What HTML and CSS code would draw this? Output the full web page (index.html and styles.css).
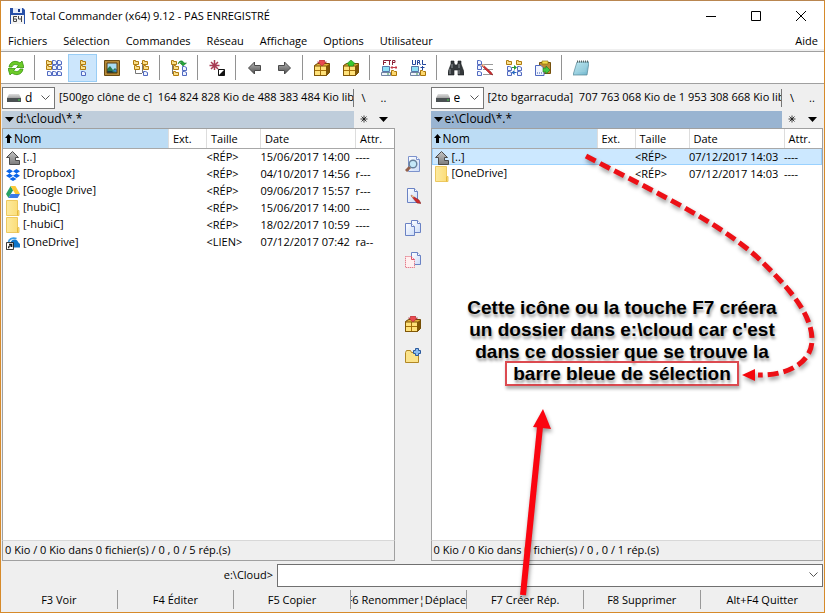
FILE: index.html
```
<!DOCTYPE html>
<html lang="fr">
<head>
<meta charset="utf-8">
<title>Total Commander (x64) 9.12 - PAS ENREGISTRÉ</title>
<link rel="stylesheet" href="styles.css">
</head>
<body>
<svg class="defs" aria-hidden="true">
  <defs>
    <linearGradient id="g-arrow" x1="0" y1="0" x2="0" y2="1"><stop offset="0" stop-color="#b5b5b5"/><stop offset="1" stop-color="#4e4e4e"/></linearGradient>
    <linearGradient id="g-up" x1="0" y1="0" x2="0" y2="1"><stop offset="0" stop-color="#c4c4c4"/><stop offset="1" stop-color="#7c7c7c"/></linearGradient>
    <linearGradient id="g-folder" x1="0" y1="0" x2="1" y2="0"><stop offset="0" stop-color="#fdeaa0"/><stop offset="1" stop-color="#fbdc74"/></linearGradient>
    <linearGradient id="g-page" x1="0" y1="0" x2="1" y2="1"><stop offset="0" stop-color="#fff"/><stop offset="1" stop-color="#ccdcf8"/></linearGradient>
    <linearGradient id="g-note" x1="0" y1="0" x2="1" y2="1"><stop offset="0" stop-color="#c8f0f8"/><stop offset="1" stop-color="#6fb4cc"/></linearGradient>
    <linearGradient id="g-drive" x1="0" y1="0" x2="0" y2="1"><stop offset="0" stop-color="#dedede"/><stop offset="1" stop-color="#a4a4a4"/></linearGradient>
    <symbol id="fold" viewBox="0 0 6 5"><path d="M.5 .5h2v1h3v3h-5z" fill="#fbe08a" stroke="#b07c10"/></symbol>
    <symbol id="doc" viewBox="0 0 5 5"><path d="M.5 .5h2l2 1v3h-4z" fill="#eef3ff" stroke="#5069c0"/></symbol>
    <symbol id="i-app" viewBox="0 0 16 16"><path d="M1 0h13l2 2v14H1z" fill="#2850a8"/><path d="M4 0h9v5H4z" fill="#e8eefa"/><path d="M9 1h2v3H9z" fill="#17388a"/><path d="M2 7h13v9H2z" fill="#f4f4f4"/><path d="M8 8.500H4.500v5h3v-2.500h-3M9.500 8v3h3.500M12.500 8v6" fill="none" stroke="#444"/></symbol>
    <symbol id="i-refresh" viewBox="0 0 16 16"><path d="M1 7C2 1 8 0 12 3l2-2 2 6.500H8.500l2-2C8 4 5 4 4 7zM15 9c-1 6-7 7-11 4l-2 2-2-6.500h7.500l-2 2c2.500 1.500 5.500 1.500 6.500-1.500z" fill="#6ccb28" stroke="#3a940f" stroke-width=".8"/></symbol>
    <symbol id="i-brief" viewBox="0 0 16 16"><use href="#fold" width="6" height="5"/><use href="#fold" y="5" width="6" height="5"/><use href="#doc" x="1" y="11" width="5" height="5"/><use href="#doc" x="6" width="5" height="5"/><use href="#doc" x="6" y="5" width="5" height="5"/><use href="#doc" x="6" y="11" width="5" height="5"/><use href="#doc" x="11" width="5" height="5"/><use href="#doc" x="11" y="5" width="5" height="5"/><use href="#doc" x="11" y="11" width="5" height="5"/></symbol>
    <symbol id="i-full" viewBox="0 0 16 16"><use href="#fold" x="5" width="6" height="5"/><use href="#fold" x="5" y="5" width="6" height="5"/><use href="#doc" x="6" y="11" width="5" height="5"/></symbol>
    <symbol id="i-thumb" viewBox="0 0 16 16"><path d="M.5 .5h15v15H.5z" fill="#b58a38" stroke="#6a4a12"/><path d="M3 3h10v10H3z" fill="#a8dcf2"/><path d="M3 9l3-3 3 4 2-2 2 2v3H3z" fill="#297850"/><path d="M3 11h5l2 2H3z" fill="#173c48"/><path d="M8 11l5-2v3z" fill="#3a84d8"/><path d="M3 3h10v10H3z" fill="none" stroke="#593c10"/></symbol>
    <symbol id="i-tree" viewBox="0 0 16 16"><path d="M2.500 5v8.500H9M8 3.500h2M9.500 4v9" fill="none" stroke="#777"/><use href="#fold" width="6" height="5"/><use href="#fold" x="1" y="5" width="6" height="5"/><use href="#fold" x="9" y="0" width="6" height="5"/><use href="#fold" x="10" y="5" width="6" height="5"/><use href="#doc" x="10" y="11" width="5" height="5"/></symbol>
    <symbol id="i-branch" viewBox="0 0 16 16"><path d="M1.500 4v10M2 8h3M2 14h3" fill="none" stroke="#777"/><use href="#fold" width="6" height="5"/><use href="#fold" x="2" y="5" width="6" height="5"/><use href="#fold" x="2" y="11" width="6" height="5"/><use href="#doc" x="11" y="6" width="5" height="5"/><use href="#doc" x="11" y="11" width="5" height="5"/><path d="M7 4c1-4 5-4 6-1h2.500L12 6 9 3h2c-1-1-2-1-4 1z" fill="#25a53a" stroke="#157528" stroke-width=".5"/></symbol>
    <symbol id="i-invert" viewBox="0 0 16 16"><path d="M5.500 0v10M.5 5.500h10M2 2l7 7M9 2l-7 7" stroke="#a83c54" stroke-width="1.500"/><path d="M9.500 9.500h6v6h-6z" fill="#111" stroke="#111"/><path d="M10 10h5l-5 5z" fill="#fff"/></symbol>
    <symbol id="i-left" viewBox="0 0 16 16"><path d="M1.500 8l6-6v3.500h6v5h-6V14z" fill="url(#g-arrow)" stroke="#4a4a4a"/></symbol>
    <symbol id="i-right" viewBox="0 0 16 16"><path d="M14.500 8l-6-6v3.500h-6v5h6V14z" fill="url(#g-arrow)" stroke="#4a4a4a"/></symbol>
    <symbol id="box" viewBox="0 0 16 16"><path d="M.5 5.500l3-2h12v9l-3 3H.5z" fill="#b98418" stroke="#6c4806"/><path d="M1 6h11.500v9H1z" fill="#ffe27a"/><path d="M12.500 6l3-2v8.500l-3 3z" fill="#805707"/><path d="M6.500 6v9M1 10.500h11.500" stroke="#a4700a"/><path d="M1 6l3-2h11l-3 2z" fill="#e4b33c"/><path d="M.5 6v9.500h12V6z" fill="none" stroke="#805707"/></symbol>
    <symbol id="i-pack" viewBox="0 0 16 16"><use href="#box" width="16" height="16"/><path d="M5.500 0h5v2h2L8 6 3.500 2h2z" fill="#e84a50" stroke="#a62830" stroke-width=".6"/></symbol>
    <symbol id="i-unpack" viewBox="0 0 16 16"><use href="#box" width="16" height="16"/><path d="M8 0l4.500 4h-2v2h-5V4h-2z" fill="#38c82e" stroke="#208018" stroke-width=".6"/></symbol>
    <symbol id="pc" viewBox="0 0 16 10"><path d="M1.500 .5h7v5h-7z" fill="#8fdff5" stroke="#5577a8"/><path d="M.5 6.500h9v3h-9z" fill="#eef2f8" stroke="#7284a4"/><path d="M6 8h2" stroke="#3a9c4a"/><path d="M10.500 4.500h2l1 1h2v4h-5z" fill="#fcd870" stroke="#a87408"/></symbol>
    <symbol id="i-ftp" viewBox="0 0 16 16"><path d="M2.500 5V.5H6M3 2.500h2M6 .5h4M8.500 1v4M11.500 5V.5H14v2h-2" fill="none" stroke="#8d2439"/><use href="#pc" y="6" width="16" height="10"/><path d="M10 7.500h6M11.500 6L10 7.500 11.500 9M14.500 6L16 7.500 14.500 9" fill="none" stroke="#c43a48"/></symbol>
    <symbol id="i-url" viewBox="0 0 16 16"><path d="M2.500 0v4.500h3V0M7.500 5V.5h2v2h-2M9 2.500l1.500 2.500M12.500 0v4.500H16" fill="none" stroke="#23479c"/><use href="#pc" y="6" width="16" height="10"/><path d="M12.500 6v4M10.500 7.500h4" stroke="#23479c"/></symbol>
    <symbol id="i-find" viewBox="0 0 16 16"><path d="M3 1h3v2l1 2h2l1-2V1h3v3l3 8v3h-6v-5H6v5H0v-3l3-8z" fill="#34383b" stroke="#1d2022" stroke-width=".6"/><path d="M4 4v4M2 9v5M11 4v4M11 10v4" stroke="#8e9499"/></symbol>
    <symbol id="i-rename" viewBox="0 0 16 16"><use href="#doc" width="5" height="5"/><use href="#doc" y="5" width="5" height="5"/><use href="#doc" y="11" width="5" height="5"/><path d="M6 4.500h10M6 9.500h10M6 14.500h10" stroke="#999"/><path d="M5 4l9 8 2 3-3-1-8-8z" fill="#d62c30" stroke="#801818" stroke-width=".5"/><path d="M5 4l3 1-2 2z" fill="#f4d6a0"/></symbol>
    <symbol id="i-sync" viewBox="0 0 16 16"><use href="#fold" width="6" height="5"/><use href="#fold" x="10" width="6" height="5"/><use href="#doc" x="1" y="6" width="5" height="5"/><use href="#doc" x="1" y="11" width="5" height="5"/><use href="#doc" x="11" y="6" width="5" height="5"/><use href="#doc" x="11" y="11" width="5" height="5"/><path d="M6 7h2V5l3 2.500L8 10V8H6z" fill="#289a30"/><path d="M10.500 13h-2v2l-3-2.500 3-2.500v2h2z" fill="#2768c0"/></symbol>
    <symbol id="i-clip" viewBox="0 0 16 16"><path d="M4.500 2.500h11v11h-11z" fill="#bd8b33" stroke="#75500d"/><path d="M7 1h6v3H7z" fill="#f5dc49" stroke="#8a7210" stroke-width=".7"/><path d="M.5 5.500H6l3 3v7H.5z" fill="#f1f5ff" stroke="#5069c0"/><path d="M2 13h6" stroke="#3658a8" stroke-dasharray="1 1"/><path d="M8 8h3V6l4 4-4 4v-2H8z" fill="#42c842" stroke="#1f781f" stroke-width=".6"/></symbol>
    <symbol id="i-note" viewBox="0 0 16 16"><path d="M4 2h12l-2 13H0z" fill="url(#g-note)" stroke="#548494" stroke-width=".7"/><path d="M4 5h10M3.500 7h10M3 9h10M2.500 11h10" stroke="#a8d6e0" stroke-width=".7"/><path d="M4 1.500h12" stroke="#566" stroke-width="2" stroke-dasharray="1 1"/></symbol>
    <symbol id="page" viewBox="0 0 10 13"><path d="M.5 .5h6l3 3v9h-9z" fill="url(#g-page)" stroke="#6a82c4"/><path d="M6.500 .5v3h3" fill="#fff" stroke="#6a82c4"/></symbol>
    <symbol id="i-view" viewBox="0 0 16 16"><path d="M3.500 .5h8l3 3v12h-11z" fill="url(#g-page)" stroke="#7c92cc"/><path d="M11.500 .5v3h3" fill="#fff" stroke="#7c92cc"/><path d="M1 15l4-4" stroke="#94604a" stroke-width="3"/><circle cx="8" cy="8" r="3.800" fill="#c5e8f8" stroke="#66809a" stroke-width="1.400"/></symbol>
    <symbol id="i-edit" viewBox="0 0 16 16"><path d="M2.500 .5h7l3 3v11h-10z" fill="url(#g-page)" stroke="#6a82c4"/><path d="M9.500 .5v3h3" fill="#fff" stroke="#6a82c4"/><path d="M6 7l8 5 2 3.500-4-.5-5-6z" fill="#cf292c" stroke="#762020" stroke-width=".5"/><path d="M6 7l3 1-1 2z" fill="#f1ce8d"/></symbol>
    <symbol id="i-copy" viewBox="0 0 16 16"><use href="#page" x="6" width="10" height="13"/><use href="#page" y="3" width="10" height="13"/></symbol>
    <symbol id="i-move" viewBox="0 0 16 16"><use href="#page" x="6" width="10" height="13"/><path d="M.5 4.500h6l3 3v8h-9z" fill="#fff0f0" stroke="#e05468" stroke-dasharray="1 1"/><path d="M6.500 4.500v3h3" fill="none" stroke="#e05468"/></symbol>
    <symbol id="i-newdir" viewBox="0 0 16 16"><path d="M.5 4.500l1-2h4l1 2h7v10h-13z" fill="#fbe38a" stroke="#b18724"/><path d="M10.500 .5h3v2h2v3h-2v2h-3v-2h-2v-3h2z" fill="#8bbdf2" stroke="#2c5a9c"/></symbol>
    <symbol id="i-up" viewBox="0 0 14 14"><path d="M6.500 .5l6 6h-3v3h4v4h-10v-7h-3z" fill="url(#g-up)" stroke="#4c4c4c"/></symbol>
    <symbol id="i-dropbox" viewBox="0 0 14 14"><path d="M3.500 1L7 3.200 3.500 5.400 0 3.200zM10.500 1L14 3.200l-3.500 2.200L7 3.200zM3.500 5.600L7 7.800 3.500 10 0 7.800zM10.500 5.600L14 7.800 10.500 10 7 7.800zM7 9l3.500 2L7 13l-3.500-2z" fill="#0b65e8"/></symbol>
    <symbol id="i-gdrive" viewBox="0 0 14 14"><path d="M4.600 1l2.500 4.300L2.500 13 0 9z" fill="#27a365"/><path d="M4.600 1h4.800L14 9H9.300z" fill="#fbc936"/><path d="M4.700 9H14l-2.400 4H2.500z" fill="#3c7be8"/></symbol>
    <symbol id="i-folder" viewBox="0 0 14 16"><path d="M.5 .5h11v10h1.500v5H.5z" fill="url(#g-folder)" stroke="#edc85f"/><path d="M11.500 10.500v5" stroke="#e5b93c"/></symbol>
    <symbol id="i-onedrive" viewBox="0 0 16 16"><path d="M5 13V9c0-3 2-5 5-5 2 0 3 1 4 3l2 2v4z" fill="#0f75c9"/><path d="M3 7c0-3 4-6 9-4" fill="none" stroke="#3e9ee8" stroke-width="2"/><path d="M.5 7.500h8v8h-8z" fill="#fff" stroke="#111"/><path d="M3 14c0-3 1-3 3-3M3.500 9.500h3v3" fill="none" stroke="#111" stroke-width="1.500"/></symbol>
    <symbol id="i-drive" viewBox="0 0 14 9"><path d="M2 1h10l2 4H0z" fill="url(#g-drive)"/><path d="M0 5h14v4H0z" fill="#4a5052"/><path d="M11 7h2" stroke="#48d848"/></symbol>
    <symbol id="i-chev" viewBox="0 0 9 6"><path d="M.5 .5l4 4 4-4" fill="none" stroke="#555"/></symbol>
    <symbol id="i-sort" viewBox="0 0 7 9"><path d="M3.500 0L7 4H5v5H2V4H0z"/></symbol>
    <symbol id="i-tri" viewBox="0 0 9 5"><path d="M0 0h9L4.500 5z"/></symbol>
    <symbol id="i-star" viewBox="0 0 8 8"><path d="M4 .5v7M.5 4h7M1.500 1.500l5 5M6.500 1.500l-5 5" stroke="#111" stroke-width=".8"/></symbol>
  </defs>
</svg>

<div class="window">
  <header class="titlebar">
    <svg class="ico"><use href="#i-app"/></svg>
    <h1>Total Commander (x64) 9.12 - PAS ENREGISTRÉ</h1>
    <div class="winbtns">
      <button aria-label="Réduire"><svg width="10" height="10"><path d="M0 5.500h10" stroke="#000"/></svg></button>
      <button aria-label="Agrandir"><svg width="10" height="10"><path d="M.5 .5h9v9h-9z" fill="none" stroke="#000"/></svg></button>
      <button aria-label="Fermer"><svg width="10" height="10"><path d="M0 0l10 10M10 0L0 10" stroke="#000"/></svg></button>
    </div>
  </header>
  <nav class="menubar">
    <button>Fichiers</button><button>Sélection</button><button>Commandes</button><button>Réseau</button><button>Affichage</button><button>Options</button><button>Utilisateur</button><button class="help">Aide</button>
  </nav>
  <div class="toolbar">
    <button aria-label="Actualiser"><svg class="ico"><use href="#i-refresh"/></svg></button><i></i>
    <button aria-label="Abrégé"><svg class="ico"><use href="#i-brief"/></svg></button>
    <button class="on" aria-label="Détaillé"><svg class="ico"><use href="#i-full"/></svg></button>
    <button aria-label="Miniatures"><svg class="ico"><use href="#i-thumb"/></svg></button>
    <button aria-label="Arborescence"><svg class="ico"><use href="#i-tree"/></svg></button><i></i>
    <button aria-label="Vue à plat"><svg class="ico"><use href="#i-branch"/></svg></button><i></i>
    <button aria-label="Inverser la sélection"><svg class="ico"><use href="#i-invert"/></svg></button><i></i>
    <button aria-label="Précédent"><svg class="ico"><use href="#i-left"/></svg></button>
    <button aria-label="Suivant"><svg class="ico"><use href="#i-right"/></svg></button><i></i>
    <button aria-label="Compresser"><svg class="ico"><use href="#i-pack"/></svg></button>
    <button aria-label="Décompresser"><svg class="ico"><use href="#i-unpack"/></svg></button><i></i>
    <button aria-label="Connexion FTP"><svg class="ico"><use href="#i-ftp"/></svg></button>
    <button aria-label="Nouvelle URL"><svg class="ico"><use href="#i-url"/></svg></button><i></i>
    <button aria-label="Rechercher"><svg class="ico"><use href="#i-find"/></svg></button>
    <button aria-label="Renommer par lot"><svg class="ico"><use href="#i-rename"/></svg></button>
    <button aria-label="Synchroniser"><svg class="ico"><use href="#i-sync"/></svg></button>
    <button aria-label="Copier les noms"><svg class="ico"><use href="#i-clip"/></svg></button><i></i>
    <button aria-label="Bloc-notes"><svg class="ico"><use href="#i-note"/></svg></button>
  </div>

  <main class="panes">
    <section class="pane">
      <div class="driverow">
        <div class="drive"><svg width="14" height="9"><use href="#i-drive"/></svg><select aria-label="Lecteur gauche"><option>d</option></select><svg width="9" height="6"><use href="#i-chev"/></svg></div>
        <div class="space">[500go clône de c]&nbsp; 164 824 828 Kio de 488 383 484 Kio libres</div>
        <div class="side"><button>\</button><button>..</button></div>
      </div>
      <div class="pathrow">
        <div class="path"><svg width="9" height="5"><use href="#i-tri"/></svg>d:\cloud\*.*</div>
        <div class="side"><button aria-label="Favoris"><svg width="8" height="8"><use href="#i-star"/></svg></button><button aria-label="Historique"><svg width="9" height="5"><use href="#i-tri"/></svg></button></div>
      </div>
      <div class="list">
        <table>
          <colgroup><col><col class="c-ext"><col class="c-size"><col class="c-date"><col class="c-attr"></colgroup>
          <thead><tr><th class="sorted"><svg width="7" height="9"><use href="#i-sort"/></svg>Nom</th><th>Ext.</th><th>Taille</th><th>Date</th><th>Attr.</th></tr></thead>
          <tbody>
            <tr><td><svg width="14" height="14"><use href="#i-up"/></svg>[..]</td><td></td><td>&lt;RÉP&gt;</td><td>15/06/2017 14:00</td><td>----</td></tr>
            <tr><td><svg width="14" height="14"><use href="#i-dropbox"/></svg>[Dropbox]</td><td></td><td>&lt;RÉP&gt;</td><td>04/10/2017 14:56</td><td>r---</td></tr>
            <tr><td><svg width="14" height="14"><use href="#i-gdrive"/></svg>[Google Drive]</td><td></td><td>&lt;RÉP&gt;</td><td>09/06/2017 15:57</td><td>r---</td></tr>
            <tr><td><svg width="14" height="16"><use href="#i-folder"/></svg>[hubiC]</td><td></td><td>&lt;RÉP&gt;</td><td>15/06/2017 14:00</td><td>----</td></tr>
            <tr><td><svg width="14" height="16"><use href="#i-folder"/></svg>[-hubiC]</td><td></td><td>&lt;RÉP&gt;</td><td>18/02/2017 10:59</td><td>----</td></tr>
            <tr><td><svg width="14" height="14"><use href="#i-onedrive"/></svg>[OneDrive]</td><td></td><td>&lt;LIEN&gt;</td><td>07/12/2017 07:42</td><td>ra--</td></tr>
          </tbody>
        </table>
      </div>
      <div class="status">0 Kio / 0 Kio dans 0 fichier(s) / 0 , 0 / 5 rép.(s)</div>
    </section>

    <div class="midbar">
      <button aria-label="Voir"><svg class="ico"><use href="#i-view"/></svg></button>
      <button aria-label="Éditer"><svg class="ico"><use href="#i-edit"/></svg></button>
      <button aria-label="Copier"><svg class="ico"><use href="#i-copy"/></svg></button>
      <button aria-label="Déplacer"><svg class="ico"><use href="#i-move"/></svg></button>
      <i></i>
      <button aria-label="Compresser"><svg class="ico"><use href="#i-pack"/></svg></button>
      <button aria-label="Créer un dossier"><svg class="ico"><use href="#i-newdir"/></svg></button>
    </div>

    <section class="pane active">
      <div class="driverow">
        <div class="drive"><svg width="14" height="9"><use href="#i-drive"/></svg><select aria-label="Lecteur droit"><option>e</option></select><svg width="9" height="6"><use href="#i-chev"/></svg></div>
        <div class="space">[2to bgarracuda]&nbsp; 707 763 068 Kio de 1 953 308 668 Kio libres</div>
        <div class="side"><button>\</button><button>..</button></div>
      </div>
      <div class="pathrow">
        <div class="path"><svg width="9" height="5"><use href="#i-tri"/></svg>e:\Cloud\*.*</div>
        <div class="side"><button aria-label="Favoris"><svg width="8" height="8"><use href="#i-star"/></svg></button><button aria-label="Historique"><svg width="9" height="5"><use href="#i-tri"/></svg></button></div>
      </div>
      <div class="list">
        <table>
          <colgroup><col><col class="c-ext"><col class="c-size"><col class="c-date"><col class="c-attr"></colgroup>
          <thead><tr><th class="sorted"><svg width="7" height="9"><use href="#i-sort"/></svg>Nom</th><th>Ext.</th><th>Taille</th><th>Date</th><th>Attr.</th></tr></thead>
          <tbody>
            <tr class="cursor"><td><svg width="14" height="14"><use href="#i-up"/></svg>[..]</td><td></td><td>&lt;RÉP&gt;</td><td>07/12/2017 14:03</td><td>----</td></tr>
            <tr><td><svg width="14" height="16"><use href="#i-folder"/></svg>[OneDrive]</td><td></td><td>&lt;RÉP&gt;</td><td>07/12/2017 14:03</td><td>----</td></tr>
          </tbody>
        </table>
      </div>
      <div class="status">0 Kio / 0 Kio dans 0 fichier(s) / 0 , 0 / 1 rép.(s)</div>
    </section>
  </main>

  <div class="cmdline">
    <label for="cmd">e:\Cloud&gt;</label>
    <div class="cmdbox"><input id="cmd" type="text"><button aria-label="Historique des commandes"><svg width="9" height="6"><use href="#i-chev"/></svg></button></div>
  </div>
  <footer class="fkeys">
    <button>F3 Voir</button><button>F4 Éditer</button><button>F5 Copier</button><button>F6 Renommer¦Déplacer</button><button>F7 Créer Rép.</button><button>F8 Supprimer</button><button>Alt+F4 Quitter</button>
  </footer>

  <svg class="arrows" width="825" height="613" aria-hidden="true">
    <path d="M586 156C640 185 712 217 757 257C785 284 812 312 812 340C812 362 788 376 758 375" fill="none" stroke="#ec1016" stroke-width="5" stroke-dasharray="11 5"/>
    <path d="M742 375l13-6v12z" fill="#f5060c"/>
    <path d="M523 595l17-168" stroke="#fb0510" stroke-width="6"/>
    <path d="M543 409l8 20-18-2z" fill="#fb0510"/>
  </svg>
  <p class="note">Cette icône ou la touche F7 créera<br>un dossier dans e:\cloud car c'est<br>dans ce dossier que se trouve la<br><span>barre bleue de sélection</span></p>
</div>
</body>
</html>
```
FILE: styles.css
```
* { box-sizing: border-box; }
body {
  margin: 0;
  background: #efefef;
  color: #000;
  font: 11px/16px "Open Sans", "Noto Sans", sans-serif;
}
button, input, select {
  font: inherit;
  color: inherit;
  background: none;
  border: 0;
  padding: 0;
  margin: 0;
}
svg { display: block; flex: none; }
.defs { position: absolute; width: 0; height: 0; }
.ico { width: 16px; height: 16px; }

.window {
  position: relative;
  display: flex;
  flex-direction: column;
  min-height: 100vh;
  border: 1px solid #d68a2a;
  border-top-color: #b98650;
  overflow: hidden;
}

.titlebar {
  display: flex;
  align-items: center;
  height: 29px;
  padding: 0 1px 0 8px;
  background: #fff;
}
.titlebar h1 { margin: 0 0 0 5px; font-size: 11px; font-weight: 400; }
.winbtns { display: flex; margin-left: auto; }
.winbtns button { width: 45px; height: 28px; display: flex; justify-content: center; align-items: center; }

.menubar {
  display: flex;
  gap: 16px;
  height: 21px;
  padding: 3px 6px 0 7px;
  background: #fff;
  border-bottom: 2px solid #f0f0f0;
}
.menubar .help { margin-left: auto; }

.toolbar {
  display: flex;
  align-items: center;
  height: 33px;
  background: #fff;
  border-top: 1px solid #a0a0a0;
  border-bottom: 1px solid #a0a0a0;
}
.toolbar button { width: 29px; height: 28px; display: flex; justify-content: center; align-items: center; border: 1px solid transparent; }
.toolbar .on { background: #cce6fc; border-color: #99cdf5; }
.toolbar i { width: 9px; height: 25px; background: linear-gradient(#929292, #929292) center / 1px 100% no-repeat; }

.panes { flex: 1; display: grid; grid-template-columns: minmax(0, 1fr) 36px minmax(0, 1fr); padding: 0 1px; }
.pane { display: flex; flex-direction: column; }

.driverow { display: flex; align-items: center; height: 26px; padding-top: 1px; }
.drive { display: flex; align-items: center; gap: 4px; width: 53px; height: 22px; padding: 0 4px; border: 1px solid #777; background: #fff; }
.drive select { flex: 1; width: 0; appearance: none; outline: 0; font-size: 12px; }
.space { flex: 1; height: 18px; margin-left: 4px; overflow: hidden; white-space: nowrap; border-right: 1px solid #777; }
.side { display: flex; width: 41px; }
.side button { width: 20px; display: flex; justify-content: center; align-items: center; }

.pathrow { display: flex; align-items: center; height: 18px; }
.path { flex: 1; display: flex; align-items: center; gap: 2px; height: 17px; padding-left: 3px; background: #bfcddb; font-size: 12px; }
.active .path { background: #99b4d1; }

.list { flex: 1; background: #fff; border: 1px solid #a0a0a0; border-bottom-color: #d8d8d8; }
table { width: 100%; table-layout: fixed; border-collapse: collapse; }
.c-ext { width: 38px; }
.c-size { width: 54px; }
.c-date { width: 95px; }
.c-attr { width: 38px; }
th { height: 19px; padding: 1px 0 0 4px; font-weight: 400; text-align: left; border-right: 1px solid #ddd; border-bottom: 1px solid #a8a8a8; }
th:last-child { border-right: 0; }
th svg { display: inline-block; margin: 0 2px 0 -2px; }
th.sorted { background: #bcdcf4; font-size: 12px; }
td { height: 17px; padding: 0; line-height: 15px; white-space: nowrap; }
td svg { display: inline-block; vertical-align: middle; margin: 0 3px 0 3px; }
.cursor { background: #cce8ff; box-shadow: inset 0 0 0 1px #99d1ff; }
.status { height: 20px; padding: 1px 2px; border: 1px solid #a0a0a0; border-top: 0; }

.midbar { padding-top: 64px; display: flex; flex-direction: column; align-items: center; }
.midbar button, .midbar i { width: 32px; height: 32px; display: flex; justify-content: center; align-items: center; }

.cmdline { display: flex; align-items: center; height: 29px; padding: 0 1px 1px; }
.cmdline label { width: 275px; text-align: right; padding-right: 4px; }
.cmdbox { flex: 1; display: flex; height: 23px; border: 1px solid #707070; background: #fff; }
.cmdbox input { flex: 1; min-width: 0; outline: 0; }
.cmdbox button { width: 18px; display: flex; justify-content: center; align-items: center; }

.fkeys { display: flex; height: 22px; padding-bottom: 3px; }
.fkeys button { flex: 1; min-width: 0; display: flex; justify-content: center; align-items: center; overflow: hidden; white-space: nowrap; border-right: 1px solid #999; }
.fkeys button:last-child { min-width: 15%; border-right: 0; }

.arrows { position: absolute; left: -1px; top: -1px; pointer-events: none; filter: drop-shadow(1px 3px 2px rgba(0, 0, 0, .4)); }
.note {
  position: absolute;
  left: 451px;
  top: 296px;
  width: 340px;
  margin: 0;
  text-align: center;
  font: bold 19px/22px "Liberation Sans", Arial, sans-serif;
  text-shadow: 1px 3px 3px rgba(0, 0, 0, .4);
}
.note span { padding: 0 6px; border: 2px solid #dc4a50; box-shadow: 1px 3px 3px rgba(0, 0, 0, .3); }
```
